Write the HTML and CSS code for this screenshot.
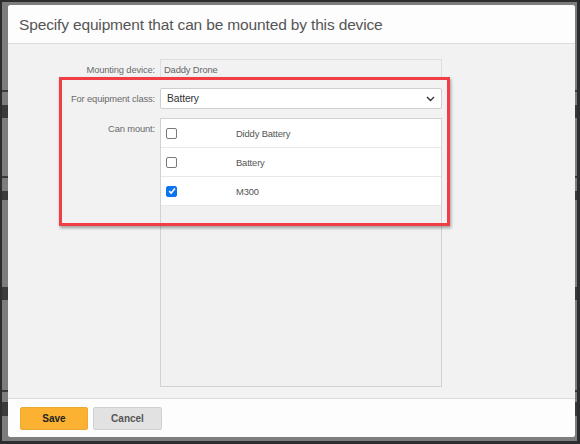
FILE: index.html
```html
<!DOCTYPE html>
<html>
<head>
<meta charset="utf-8">
<link rel="stylesheet" href="styles.css">
</head>
<body>
<div class="backdrop">
  <div class="dialog">
    <div class="dialog-header">
      <h1 class="title">Specify equipment that can be mounted by this device</h1>
    </div>
    <div class="dialog-body">
      <div class="form">
        <div class="label label-mid">Mounting device:</div>
        <div class="readonly">Daddy Drone</div>

        <div class="label label-mid">For equipment class:</div>
        <div class="select">
          <span>Battery</span>
          <svg class="chevron" width="9" height="6" viewBox="0 0 9 6"><path d="M1 1 L4.5 4.5 L8 1" fill="none" stroke="#333" stroke-width="1.4"/></svg>
        </div>

        <div class="label label-top">Can mount:</div>
        <div class="listbox">
          <div class="row"><span class="cb"></span><span class="row-text">Diddy Battery</span></div>
          <div class="row"><span class="cb"></span><span class="row-text">Battery</span></div>
          <div class="row"><span class="cb cb-checked"><svg width="8" height="8" viewBox="0 0 8 8"><path d="M1.2 4.2 L3.2 6.1 L6.9 1.6" fill="none" stroke="#fff" stroke-width="1.6"/></svg></span><span class="row-text">M300</span></div>
        </div>
      </div>
    </div>
    <div class="dialog-footer">
      <button class="btn btn-save">Save</button>
      <button class="btn btn-cancel">Cancel</button>
    </div>
  </div>
</div>
<div class="highlight"></div>
</body>
</html>
```

FILE: styles.css
```css
html, body {
  margin: 0;
  padding: 0;
}
body {
  background: #2b2d2f;
  width: 580px;
  height: 444px;
  padding: 2px 3px 3px 2px;
  box-sizing: border-box;
  font-family: "Liberation Sans", Arial, sans-serif;
  overflow: hidden;
}
.backdrop {
  height: 439px;
  box-sizing: border-box;
  padding: 3px 2px 4px 6px;
  background:
    linear-gradient(to bottom,
      #7d7d7d 0, #7d7d7d 88px, #3c3c3c 88px, #3c3c3c 90px,
      #7d7d7d 90px, #7d7d7d 103px, #3a3a3a 103px, #3a3a3a 116px,
      #7d7d7d 116px, #7d7d7d 174px, #3a3a3a 174px, #3a3a3a 176px,
      #7d7d7d 176px, #7d7d7d 189px, #3a3a3a 189px, #3a3a3a 198px,
      #7d7d7d 198px, #7d7d7d 285px, #3a3a3a 285px, #3a3a3a 298px,
      #7d7d7d 298px, #7d7d7d 388px, #3a3a3a 388px, #3a3a3a 390px,
      #7d7d7d 390px, #7d7d7d 400px, #3a3a3a 400px, #3a3a3a 414px,
      #7d7d7d 414px);
}
.dialog {
  height: 432px;
  background: #f2f2f2;
  border-radius: 3px;
  display: flex;
  flex-direction: column;
  overflow: hidden;
}
.dialog-header {
  height: 38px;
  background: #fdfdfd;
  border-bottom: 1px solid #dcdcdc;
  display: flex;
  align-items: center;
  padding-left: 11px;
}
.title {
  margin: 0;
  font-size: 15.5px;
  letter-spacing: -0.15px;
  font-weight: normal;
  color: #555;
  padding-top: 2px;
}
.dialog-body {
  flex: 1;
  padding-top: 15px;
}
.form {
  display: grid;
  grid-template-columns: 147px 282px;
  grid-template-rows: 20px 21px 269px;
  column-gap: 5px;
  row-gap: 9px;
}
.label {
  font-size: 9.4px;
  letter-spacing: -0.15px;
  color: #6a6a6a;
  text-align: right;
}
.label-mid {
  align-self: center;
}
.label-top {
  padding-top: 5px;
}
.readonly {
  box-sizing: border-box;
  border: 1px solid #dedede;
  background: #f2f2f2;
  font-size: 9.4px;
  letter-spacing: -0.15px;
  color: #666;
  padding-left: 3px;
  display: flex;
  align-items: center;
}
.select {
  box-sizing: border-box;
  border: 1px solid #cfcfcf;
  border-radius: 2px;
  background: #fff;
  font-size: 10.3px;
  letter-spacing: -0.1px;
  color: #333;
  padding: 0 6px 0 6px;
  display: flex;
  align-items: center;
  justify-content: space-between;
}
.chevron {
  margin-top: 1px;
}
.listbox {
  box-sizing: border-box;
  border: 1px solid #d2d2d2;
  background: #f1f1f1;
  display: flex;
  flex-direction: column;
}
.row {
  height: 28px;
  background: #fff;
  border-bottom: 1px solid #e8e8e8;
  display: flex;
  align-items: center;
  padding-left: 5px;
}
.cb {
  width: 9px;
  height: 9px;
  border: 1px solid #7a7a7a;
  border-radius: 2px;
  background: #fff;
  display: flex;
  align-items: center;
  justify-content: center;
}
.cb-checked {
  background: #0b74f0;
  border-color: #0b74f0;
}
.row-text {
  margin-left: 59px;
  font-size: 9.4px;
  letter-spacing: -0.15px;
  color: #555;
}
.dialog-footer {
  background: #fdfdfd;
  border-top: 1px solid #dcdcdc;
  display: flex;
  align-items: flex-start;
  gap: 5px;
  padding: 8px 0 0 12px;
  box-sizing: border-box;
  height: 39px;
}
.btn {
  height: 23px;
  border-radius: 2px;
  font-family: "Liberation Sans", Arial, sans-serif;
  font-size: 10px;
  font-weight: bold;
  letter-spacing: 0;
  padding: 0;
}
.btn-save {
  width: 68px;
  background: #fbb233;
  border: 1px solid #ebaa33;
  color: #222;
}
.btn-cancel {
  width: 69px;
  background: #e2e2e2;
  border: 1px solid #d0d0d0;
  color: #555;
}
.highlight {
  position: absolute;
  left: 59px;
  top: 77px;
  width: 385px;
  height: 143px;
  border: 3px solid #f03e45;
  box-shadow: 1px 2px 3px rgba(0, 0, 0, 0.35);
  pointer-events: none;
}
```
